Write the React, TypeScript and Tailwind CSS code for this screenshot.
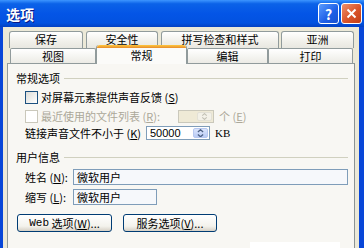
import { ReactNode } from 'react';

const font = "font-['Noto_Sans_CJK_SC','Liberation_Sans',sans-serif]";

function Tab({ label, w, selected }: { label: string; w: string; selected?: boolean }) {
  if (selected) {
    return (
      <div
        className={`${w} relative z-10 -mb-px h-[19px] shrink-0 rounded-t-[3px] border-x border-[#919b9c] bg-[#fbfbf9] flex flex-col items-center`}
      >
        <div className="h-[3px] w-full rounded-t-[3px] bg-[linear-gradient(to_bottom,#ffc83c,#e68b2c)]" />
        <span className="mt-[2px] text-[11px] leading-none">{label}</span>
      </div>
    );
  }
  return (
    <div
      className={`${w} shrink-0 rounded-t-[3px] border border-b-0 border-[#919b9c] bg-[linear-gradient(to_bottom,#ffffff,#f1f0ea_60%,#e8e7e0)] flex items-start justify-center pt-[2px] text-[11px] leading-none`}
    >
      {label}
    </div>
  );
}

function GroupLabel({ children }: { children: ReactNode }) {
  return (
    <div className="flex h-[14px] items-center">
      <span className="text-[11px] leading-none">{children}</span>
      <div className="ml-[4px] mr-[6px] h-px flex-1 bg-[#d0d0bf]" />
    </div>
  );
}

function Key({ k }: { k: string }) {
  return (
    <span>
      (<u className="underline-offset-1">{k}</u>)
    </span>
  );
}

function Spin({ disabled }: { disabled?: boolean }) {
  const c = disabled ? '#c2c0b4' : '#4d6185';
  return (
    <div
      className={`flex h-full w-[15px] flex-col items-center justify-center gap-[1px] rounded-[2px] border ${
        disabled ? 'border-[#e3e1d6] bg-[#f3f1e8]' : 'border-[#b7c8f0] bg-[linear-gradient(to_bottom,#dbe5fc,#b9cbf5)]'
      }`}
    >
      <svg width="7" height="4" viewBox="0 0 7 4">
        <path d="M0.5 3.5 L3.5 0.8 L6.5 3.5" stroke={c} strokeWidth="1.4" fill="none" />
      </svg>
      <svg width="7" height="4" viewBox="0 0 7 4">
        <path d="M0.5 0.5 L3.5 3.2 L6.5 0.5" stroke={c} strokeWidth="1.4" fill="none" />
      </svg>
    </div>
  );
}

function XpButton({ children, w }: { children: ReactNode; w: string }) {
  return (
    <div
      className={`${w} flex h-[18px] items-center justify-center rounded-[3px] border border-[#003c74] bg-[linear-gradient(to_bottom,#ffffff,#f3f2ec_70%,#d6d0c5)] text-[11px] leading-none`}
    >
      {children}
    </div>
  );
}

export default function App() {
  return (
    <div className={`flex h-[248px] w-[364px] flex-col overflow-hidden bg-[#0846d8] text-black ${font}`}>
      {/* title bar */}
      <div className="flex h-[27px] shrink-0 items-center bg-[linear-gradient(to_bottom,#3d95ff_0%,#0b62e8_14%,#0455e6_50%,#0252e0_85%,#0341c2_100%)] pl-[6px] pr-[2px]">
        <span className="text-[14px] font-bold leading-none text-white [text-shadow:1px_1px_0_#0a1883]">选项</span>
        <div className="ml-auto flex gap-[2px]">
          <div className="flex h-[21px] w-[21px] items-center justify-center rounded-[3px] border border-white bg-[linear-gradient(135deg,#5a9cff,#1d5ee6_60%,#1a52cf)] text-[14px] font-bold leading-none text-white">
            ?
          </div>
          <div className="flex h-[21px] w-[21px] items-center justify-center rounded-[3px] border border-white bg-[linear-gradient(135deg,#f0906c,#d9542a_55%,#c23e15)]">
            <svg width="11" height="11" viewBox="0 0 11 11">
              <path d="M1.5 1.5 L9.5 9.5 M9.5 1.5 L1.5 9.5" stroke="white" strokeWidth="2" />
            </svg>
          </div>
        </div>
      </div>

      {/* window body */}
      <div className="ml-[3px] mr-[5px] flex flex-1 flex-col bg-[#ece9d8] px-[4px] pt-[4px]">
        {/* tabs */}
        <div className="flex h-[17px] pl-[2px]">
          <Tab label="保存" w="w-[74px]" />
          <div className="w-[3px]" />
          <Tab label="安全性" w="w-[72px]" />
          <div className="w-[3px]" />
          <Tab label="拼写检查和样式" w="w-[118px]" />
          <div className="w-[2px]" />
          <Tab label="亚洲" w="w-[73px]" />
        </div>
        <div className="flex h-[15px] items-end pl-[3px]">
          <div className="flex h-[15px] w-[86px] items-center justify-center rounded-t-[2px] border border-b-0 border-[#919b9c] bg-[linear-gradient(to_bottom,#ffffff,#ecebe5)] text-[11px] leading-none">
            视图
          </div>
          <Tab label="常规" w="w-[91px]" selected />
          <div className="flex h-[15px] w-[81px] items-center justify-center rounded-t-[2px] border border-b-0 border-[#919b9c] bg-[linear-gradient(to_bottom,#ffffff,#ecebe5)] text-[11px] leading-none">
            编辑
          </div>
          <div className="flex h-[15px] w-[85px] items-center justify-center rounded-t-[2px] border border-b-0 border-[#919b9c] bg-[linear-gradient(to_bottom,#ffffff,#ecebe5)] text-[11px] leading-none">
            打印
          </div>
        </div>

        {/* panel */}
        <div className="flex flex-1 flex-col border border-b-0 border-[#919b9c] border-r-[#8c9393] bg-[#f8f7f3] pl-[8px] pt-[7px]">
          <GroupLabel>常规选项</GroupLabel>

          <div className="mt-[5px] flex h-[14px] items-center pl-[9px] text-[11px] leading-none">
            <div className="h-[13px] w-[13px] border border-[#1c5180] bg-[linear-gradient(135deg,#dcdcd7,#ffffff)]" />
            <span className="ml-[3px]">
              对屏幕元素提供声音反馈 <Key k="S" />
            </span>
          </div>

          <div className="mt-[5px] flex h-[14px] items-center pl-[9px] text-[11px] leading-none text-[#aca899]">
            <div className="h-[13px] w-[13px] border border-[#cac8bb] bg-white" />
            <span className="ml-[3px] w-[137px]">
              最近使用的文件列表 <Key k="R" />:
            </span>
            <div className="flex h-[13px] w-[36px] items-stretch justify-end border border-[#cac8bb] bg-[#efead6] p-px">
              <Spin disabled />
            </div>
            <span className="ml-[5px]">
              个 <Key k="E" />
            </span>
          </div>

          <div className="mt-[3px] flex h-[14px] items-center pl-[9px] text-[11px] leading-none">
            <span className="w-[121px]">
              链接声音文件不小于 <Key k="K" />
            </span>
            <div className="flex h-[14px] w-[64px] items-stretch border border-[#7f9db9] bg-white p-px">
              <span className="flex flex-1 items-center pl-[2px] font-['Liberation_Sans',sans-serif] text-[11px]">50000</span>
              <Spin />
            </div>
            <span className="ml-[5px] font-['Liberation_Serif',serif] text-[11px]">KB</span>
          </div>

          <div className="mt-[10px]">
            <GroupLabel>用户信息</GroupLabel>
          </div>

          <div className="mt-[5px] flex h-[16px] items-center pl-[9px] text-[11px] leading-none">
            <span className="w-[48px]">
              姓名 <Key k="N" />:
            </span>
            <div className="flex h-[16px] w-[275px] items-center border border-[#7f9db9] bg-[#f6f8fb] pl-[3px]">微软用户</div>
          </div>

          <div className="mt-[4px] flex h-[16px] items-center pl-[9px] text-[11px] leading-none">
            <span className="w-[48px]">
              缩写 <Key k="L" />:
            </span>
            <div className="flex h-[16px] w-[84px] items-center border border-[#7f9db9] bg-[#f6f8fb] pl-[3px]">微软用户</div>
          </div>

          <div className="mt-[9px] flex h-[18px] items-center pl-[1px]">
            <XpButton w="w-[95px]">
              <span className="font-['Liberation_Mono',monospace]">Web</span>&nbsp;选项 <Key k="W" />...
            </XpButton>
            <div className="w-[11px]" />
            <XpButton w="w-[94px]">
              服务选项 <Key k="V" />...
            </XpButton>
          </div>

          <div className="mt-[10px] flex flex-1 justify-end pr-[14px]">
            <div className="w-[90px] bg-white" />
          </div>
        </div>
      </div>
    </div>
  );
}
